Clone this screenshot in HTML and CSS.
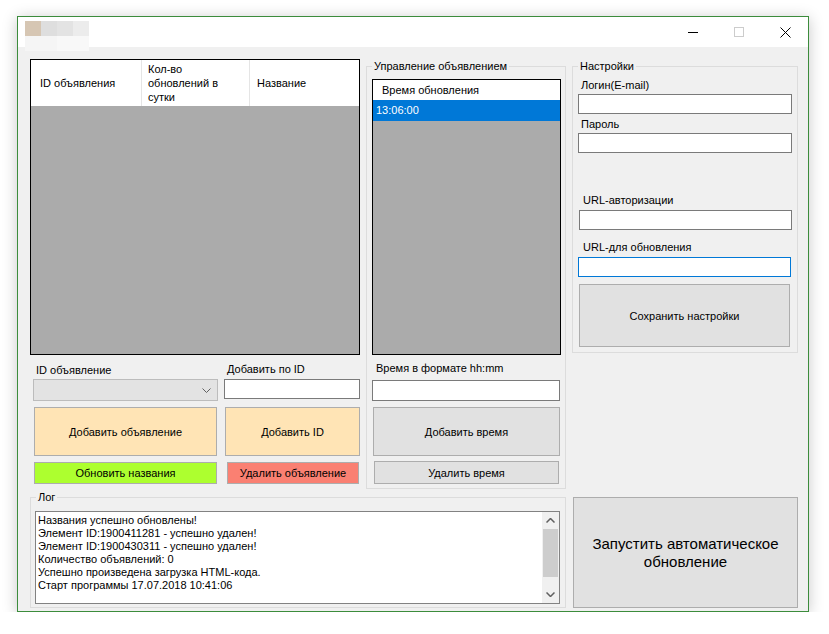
FILE: index.html
```html
<!DOCTYPE html>
<html lang="ru">
<head>
    <meta charset="UTF-8">
    <title>Автообновление объявлений</title>
    <link rel="stylesheet" href="styles.css">
</head>
<body>

<div class="window">
    <div class="titlebar">
        <div class="app-icon">
            <span class="px px-a"></span><span class="px px-b"></span><span class="px px-c"></span><span class="px px-d"></span>
            <span class="px px-e"></span><span class="px px-e"></span><span class="px px-f"></span><span class="px px-f"></span>
        </div>
        <div class="caption-buttons">
            <span class="cap">
                <svg width="10" height="10" viewBox="0 0 10 10"><line x1="0" y1="5.5" x2="10" y2="5.5" stroke="#000" stroke-width="1"/></svg>
            </span>
            <span class="cap">
                <svg width="10" height="10" viewBox="0 0 10 10"><rect x="0.5" y="0.5" width="9" height="9" fill="none" stroke="#cccccc" stroke-width="1"/></svg>
            </span>
            <span class="cap">
                <svg width="11" height="11" viewBox="0 0 11 11"><path d="M0.5 0.5 L10.5 10.5 M10.5 0.5 L0.5 10.5" stroke="#000" stroke-width="1" fill="none"/></svg>
            </span>
        </div>
    </div>

    <div class="client">
        <div class="top-row">
            <div class="ads-col">
                <div class="listview ads-list">
                    <div class="lv-header">
                        <div class="lv-col col-id">ID объявления</div>
                        <div class="lv-col col-count">Кол-во<br>обновлений в<br>сутки</div>
                        <div class="lv-col col-name">Название</div>
                    </div>
                    <div class="lv-body"></div>
                </div>

                <div class="ads-controls">
                    <label class="lbl lbl-id">ID объявление</label>
                    <label class="lbl lbl-add" for="addId">Добавить по ID</label>

                    <div class="combo">
                        <svg width="9" height="5" viewBox="0 0 9 5"><polyline points="0.5,0.5 4.5,4.5 8.5,0.5" fill="none" stroke="#606060" stroke-width="1"/></svg>
                    </div>
                    <input class="textbox tb-add" id="addId" type="text">

                    <button class="btn btn-peach btn-add-ad">Добавить объявление</button>
                    <button class="btn btn-peach btn-add-id">Добавить ID</button>

                    <button class="btn btn-green btn-refresh">Обновить названия</button>
                    <button class="btn btn-red btn-delete">Удалить объявление</button>
                </div>
            </div>

            <fieldset class="group group-manage">
                <legend>Управление объявлением</legend>
                <div class="listview time-list">
                    <div class="lv-header time-header">
                        <div class="lv-col col-time">Время обновления</div>
                    </div>
                    <div class="time-row selected">13:06:00</div>
                    <div class="lv-body"></div>
                </div>
                <label class="lbl lbl-time" for="timeInput">Время в формате hh:mm</label>
                <input class="textbox tb-time" id="timeInput" type="text">
                <button class="btn btn-add-time">Добавить время</button>
                <button class="btn btn-del-time">Удалить время</button>
            </fieldset>

            <fieldset class="group group-settings">
                <legend>Настройки</legend>
                <label class="lbl lbl-login" for="login">Логин(E-mail)</label>
                <input class="textbox tb-login" id="login" type="text">
                <label class="lbl lbl-pass" for="pass">Пароль</label>
                <input class="textbox tb-pass" id="pass" type="password">
                <label class="lbl lbl-auth" for="authUrl">URL-авторизации</label>
                <input class="textbox tb-auth" id="authUrl" type="text">
                <label class="lbl lbl-upd" for="updUrl">URL-для обновления</label>
                <input class="textbox tb-upd" id="updUrl" type="text">
                <button class="btn btn-save">Сохранить настройки</button>
            </fieldset>
        </div>

        <div class="bottom-row">
            <fieldset class="group group-log">
                <legend>Лог</legend>
                <div class="log-box">
                    <div class="log-text">
                        <div>Названия успешно обновлены!</div>
                        <div>Элемент ID:1900411281 - успешно удален!</div>
                        <div>Элемент ID:1900430311 - успешно удален!</div>
                        <div>Количество объявлений: 0</div>
                        <div>Успешно произведена загрузка HTML-кода.</div>
                        <div>Старт программы 17.07.2018 10:41:06</div>
                    </div>
                    <div class="scrollbar">
                        <div class="sb-arrow">
                            <svg width="9" height="5" viewBox="0 0 9 5"><polyline points="0.5,4.5 4.5,0.5 8.5,4.5" fill="none" stroke="#606060" stroke-width="1.5"/></svg>
                        </div>
                        <div class="sb-thumb"></div>
                        <div class="sb-track"></div>
                        <div class="sb-arrow">
                            <svg width="9" height="5" viewBox="0 0 9 5"><polyline points="0.5,0.5 4.5,4.5 8.5,0.5" fill="none" stroke="#606060" stroke-width="1.5"/></svg>
                        </div>
                    </div>
                </div>
            </fieldset>

            <button class="btn btn-start">Запустить автоматическое<br>обновление</button>
        </div>
    </div>
</div>

</body>
</html>
```

FILE: styles.css
```css
body {
    margin: 0;
    background-color: #ffffff;
    font-family: "Liberation Sans", Arial, sans-serif;
    font-size: 11px;
    color: #000;
}

.window {
    box-sizing: border-box;
    width: 792px;
    height: 596px;
    margin: 16px 0 0 17px;
    border: 1px solid #3c8c3c;
    box-shadow: 0 2px 14px rgba(0, 0, 0, 0.22);
    background-color: #f0f0f0;
}

/* title bar */

.titlebar {
    display: flex;
    height: 30px;
    background-color: #ffffff;
}

.app-icon {
    position: relative;
    z-index: 1;
    display: grid;
    grid-template-columns: repeat(4, 16px);
    grid-auto-rows: 15px;
    margin: 4px 0 0 7px;
}

.px-a { background-color: #d6c6b3; }
.px-b { background-color: #dedede; }
.px-c { background-color: #e3e3e3; }
.px-d { background-color: #ececec; }
.px-e { background-color: #f5f5f5; }
.px-f { background-color: #f8f8f8; }

.caption-buttons {
    display: flex;
    margin-left: auto;
}

.cap {
    display: flex;
    justify-content: center;
    align-items: center;
    width: 46px;
    height: 30px;
}

/* client area */

.client {
    height: 564px;
    box-sizing: border-box;
    padding: 12px 10px 0 12px;
}

.top-row {
    display: flex;
    align-items: flex-start;
}

.bottom-row {
    display: flex;
    align-items: flex-start;
    margin-top: 1px;
}

.lbl {
    display: block;
    line-height: 14px;
    white-space: nowrap;
}

.textbox {
    display: block;
    box-sizing: border-box;
    height: 20px;
    margin: 0;
    padding: 0 3px;
    border: 1px solid #7a7a7a;
    background-color: #ffffff;
    font: inherit;
    outline: none;
}

.btn {
    display: block;
    box-sizing: border-box;
    margin: 0;
    padding: 0;
    border: 1px solid #adadad;
    background-color: #e1e1e1;
    font: inherit;
    color: #000;
    cursor: pointer;
}

.btn-peach { background-color: #ffe4b5; }
.btn-green { background-color: #adff2f; }
.btn-red { background-color: #fa8072; }

/* list views */

.listview {
    box-sizing: border-box;
    display: flex;
    flex-direction: column;
    border: 1px solid #000;
    background-color: #ababab;
}

.lv-header {
    display: flex;
    background-color: #ffffff;
}

.lv-col {
    display: flex;
    align-items: center;
    box-sizing: border-box;
    border-right: 1px solid #e5e5e5;
    line-height: 14px;
}

.lv-body {
    flex: 1;
}

/* advertisements column */

.ads-col {
    width: 330px;
}

.ads-list {
    height: 296px;
}

.ads-list .lv-header {
    height: 46px;
}

.col-id {
    width: 111px;
    padding-left: 9px;
}

.col-count {
    width: 108px;
    padding-left: 6px;
}

.col-name {
    flex: 1;
    padding-left: 7px;
    border-right: none;
}

.ads-controls {
    display: grid;
    grid-template-columns: 188px 136px;
    column-gap: 6px;
    align-items: start;
    margin-top: 8px;
}

.lbl-id { padding-left: 6px; }
.lbl-add { padding-left: 3px; margin-top: -1px; }

.combo {
    display: flex;
    justify-content: flex-end;
    align-items: center;
    box-sizing: border-box;
    width: 185px;
    height: 22px;
    margin: 2px 0 0 3px;
    padding-right: 6px;
    border: 1px solid #bcbcbc;
    background-color: #e3e3e3;
}

.tb-add {
    width: 136px;
    margin-top: 2px;
}

.btn-add-ad {
    width: 183px;
    height: 49px;
    margin: 6px 0 0 4px;
}

.btn-add-id {
    width: 135px;
    height: 49px;
    margin: 6px 0 0 1px;
}

.btn-refresh {
    width: 183px;
    height: 22px;
    margin: 6px 0 0 4px;
}

.btn-delete {
    width: 132px;
    height: 22px;
    margin: 6px 0 0 3px;
}

/* group boxes */

.group {
    box-sizing: border-box;
    min-width: 0;
    margin: 0;
    border: 1px solid #dcdcdc;
}

.group legend {
    padding: 0 2px;
    line-height: 14px;
}

.group-manage {
    width: 200px;
    height: 430px;
    margin-left: 6px;
    padding: 6px 0 0 5px;
}

.time-list {
    width: 189px;
    height: 276px;
}

.time-header {
    height: 20px;
}

.col-time {
    flex: 1;
    padding-left: 9px;
    border-right: none;
}

.time-row {
    height: 21px;
    line-height: 21px;
    padding-left: 3px;
}

.time-row.selected {
    background-color: #0078d7;
    color: #ffffff;
}

.lbl-time {
    margin-top: 6px;
    padding-left: 4px;
}

.tb-time {
    width: 188px;
    height: 21px;
    margin-top: 5px;
}

.btn-add-time {
    width: 187px;
    height: 49px;
    margin: 6px 0 0 1px;
}

.btn-del-time {
    width: 185px;
    height: 23px;
    margin: 5px 0 0 2px;
}

.group-settings {
    width: 226px;
    height: 294px;
    margin-left: 6px;
    padding: 5px 0 0 5px;
}

.lbl-login { padding-left: 3px; }

.tb-login,
.tb-pass {
    width: 214px;
    margin-top: 2px;
}

.lbl-pass {
    margin-top: 3px;
    padding-left: 3px;
}

.lbl-auth {
    margin-top: 40px;
    padding-left: 5px;
}

.tb-auth {
    width: 213px;
    margin: 3px 0 0 1px;
}

.lbl-upd {
    margin-top: 10px;
    padding-left: 5px;
}

.tb-upd {
    width: 213px;
    margin-top: 3px;
    border-color: #0078d7;
}

.btn-save {
    width: 211px;
    height: 63px;
    margin: 7px 0 0 1px;
}

/* log */

.group-log {
    width: 536px;
    height: 118px;
    padding: 7px 0 0 4px;
}

.group-log legend {
    margin-left: 1px;
}

.log-box {
    display: flex;
    box-sizing: border-box;
    width: 525px;
    height: 93px;
    border: 1px solid #828282;
    background-color: #ffffff;
}

.log-text {
    flex: 1;
    padding: 2px 0 0 2px;
    line-height: 13px;
    white-space: nowrap;
}

.scrollbar {
    display: flex;
    flex-direction: column;
    width: 17px;
    background-color: #f0f0f0;
}

.sb-arrow {
    display: flex;
    justify-content: center;
    align-items: center;
    height: 17px;
}

.sb-thumb {
    height: 48px;
    margin: 0 1px;
    background-color: #cdcdcd;
}

.sb-track {
    flex: 1;
}

.btn-start {
    width: 225px;
    height: 111px;
    margin: 7px 0 0 7px;
    font-size: 15px;
    line-height: 18px;
}
```
